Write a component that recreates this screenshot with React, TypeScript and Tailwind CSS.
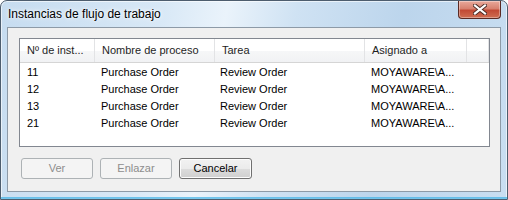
import React from 'react';

type Row = {
  id: string;
  proceso: string;
  tarea: string;
  asignado: string;
};

const rows: Row[] = [
  { id: '11', proceso: 'Purchase Order', tarea: 'Review Order', asignado: 'MOYAWARE\\A...' },
  { id: '12', proceso: 'Purchase Order', tarea: 'Review Order', asignado: 'MOYAWARE\\A...' },
  { id: '13', proceso: 'Purchase Order', tarea: 'Review Order', asignado: 'MOYAWARE\\A...' },
  { id: '21', proceso: 'Purchase Order', tarea: 'Review Order', asignado: 'MOYAWARE\\A...' },
];

const uiFont = { fontFamily: '"Liberation Sans", Arial, sans-serif' };

export default function App() {
  return (
    <div className="h-[200px] w-[508px] overflow-hidden bg-white">
      <div className="flex h-[200px] w-[508px] flex-col rounded-t-[7px] border border-[#4d5d6e] bg-[linear-gradient(100deg,#c6dcf0_0%,#d8e8f6_30%,#eaf3fb_42%,#cfe2f3_55%,#bcd5ec_75%,#c9def1_100%)] shadow-[inset_0_0_0_1px_rgba(255,255,255,0.6)]">
        <div className="flex h-[26px] shrink-0 items-start justify-between">
          <div
            className="pl-[7px] pt-[5px] text-[12px] leading-[16px] text-black [text-shadow:0_0_6px_#fff,0_0_3px_#fff]"
            style={uiFont}
          >
            Instancias de flujo de trabajo
          </div>
          <CloseButton />
        </div>

        <div className="mx-[6px] flex h-[165px] shrink-0 flex-col border border-[#8d9aa7] bg-[#f0f0f0] pl-[11px] pt-[10px]">
          <div
            className="h-[109px] w-[471px] border border-[#828790] bg-white text-[11px] leading-[17px] text-[#000]"
            style={uiFont}
          >
            <div className="flex h-[24px] border-b border-[#d5d5d5] bg-[linear-gradient(#ffffff,#ffffff_50%,#f6f7f8_50%,#f1f2f4)] text-[#1e1e1e]">
              <HeaderCell width="w-[75px]" label="Nº de inst..." />
              <HeaderCell width="w-[120px]" label="Nombre de proceso" />
              <HeaderCell width="w-[150px]" label="Tarea" />
              <HeaderCell width="w-[102px]" label="Asignado a" />
              <div className="flex-1 border-r border-[#e2e3e5]" />
            </div>
            <div className="pt-[1px]">
              {rows.map((row) => (
                <div key={row.id} className="flex h-[17px] items-center">
                  <div className="w-[75px] pl-[7px]">{row.id}</div>
                  <div className="w-[120px] pl-[6px]">{row.proceso}</div>
                  <div className="w-[150px] pl-[5px]">{row.tarea}</div>
                  <div className="w-[102px] pl-[6px]">{row.asignado}</div>
                </div>
              ))}
            </div>
          </div>

          <div className="ml-[2px] mt-[11px] flex gap-[7px]" style={uiFont}>
            <DialogButton label="Ver" disabled />
            <DialogButton label="Enlazar" disabled />
            <DialogButton label="Cancelar" />
          </div>
        </div>

        <div className="mt-auto h-[2px] bg-[#3fb0e6] opacity-70" />
      </div>
    </div>
  );
}

function HeaderCell({ width, label }: { width: string; label: string }) {
  return (
    <div className={`${width} flex items-center border-r border-[#e2e3e5] pl-[7px] text-[11px]`}>
      {label}
    </div>
  );
}

function DialogButton({ label, disabled }: { label: string; disabled?: boolean }) {
  if (disabled) {
    return (
      <div className="flex h-[21px] w-[72px] items-center justify-center rounded-[3px] border border-[#adb2b5] bg-[#f4f4f4] text-[11px] text-[#8d8d8d]">
        {label}
      </div>
    );
  }

  return (
    <div className="flex h-[21px] w-[73px] items-center justify-center rounded-[3px] border border-[#707070] bg-[linear-gradient(#f2f2f2,#ebebeb_50%,#dddddd_50%,#cfcfcf)] text-[11px] text-black shadow-[inset_0_0_0_1px_#fcfcfc]">
      {label}
    </div>
  );
}

function CloseButton() {
  return (
    <div className="mr-[6px] flex h-[18px] w-[43px] items-center justify-center rounded-b-[4px] border border-t-0 border-[#5a2a24] bg-[linear-gradient(#e9a99b,#d7816f_45%,#c24a35_55%,#cf6e52)] shadow-[inset_0_0_0_1px_rgba(255,255,255,0.35)]">
      <svg width="14" height="11" viewBox="0 0 14 11">
        <path
          d="M2 1.5 L12 9.5 M12 1.5 L2 9.5"
          stroke="#4a2a24"
          strokeWidth="4"
          strokeLinecap="square"
        />
        <path
          d="M2 1.5 L12 9.5 M12 1.5 L2 9.5"
          stroke="#ffffff"
          strokeWidth="2.2"
          strokeLinecap="square"
        />
      </svg>
    </div>
  );
}
